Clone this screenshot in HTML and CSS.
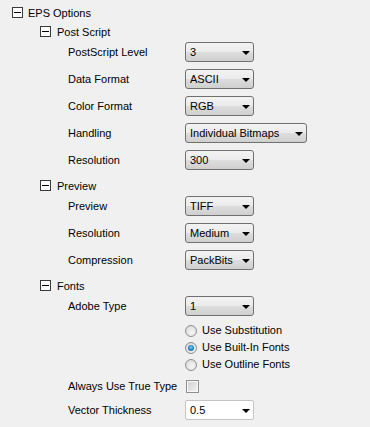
FILE: index.html
```html
<!DOCTYPE html>
<html lang="en">
<head>
  <meta charset="UTF-8" />
  <title>EPS Options</title>
  <link rel="stylesheet" href="styles.css">
</head>
<body>
  <div class="tree">
    <div class="node-head lvl0"><span class="expander"></span><span>EPS Options</span></div>

    <div class="node-head lvl1"><span class="expander"></span><span>Post Script</span></div>
    <div class="prop"><span class="label">PostScript Level</span><div class="combo"><span>3</span><i class="arrow"></i></div></div>
    <div class="prop"><span class="label">Data Format</span><div class="combo"><span>ASCII</span><i class="arrow"></i></div></div>
    <div class="prop"><span class="label">Color Format</span><div class="combo"><span>RGB</span><i class="arrow"></i></div></div>
    <div class="prop"><span class="label">Handling</span><div class="combo wide"><span>Individual Bitmaps</span><i class="arrow"></i></div></div>
    <div class="prop"><span class="label">Resolution</span><div class="combo"><span>300</span><i class="arrow"></i></div></div>

    <div class="node-head lvl1"><span class="expander"></span><span>Preview</span></div>
    <div class="prop"><span class="label">Preview</span><div class="combo"><span>TIFF</span><i class="arrow"></i></div></div>
    <div class="prop"><span class="label">Resolution</span><div class="combo"><span>Medium</span><i class="arrow"></i></div></div>
    <div class="prop"><span class="label">Compression</span><div class="combo"><span>PackBits</span><i class="arrow"></i></div></div>

    <div class="node-head lvl1"><span class="expander"></span><span>Fonts</span></div>
    <div class="prop"><span class="label">Adobe Type</span><div class="combo"><span>1</span><i class="arrow"></i></div></div>
    <div class="radios">
      <div class="radio-row"><span class="radio"></span><span>Use Substitution</span></div>
      <div class="radio-row"><span class="radio checked"></span><span>Use Built-In Fonts</span></div>
      <div class="radio-row"><span class="radio"></span><span>Use Outline Fonts</span></div>
    </div>
    <div class="prop check-row"><span class="label">Always Use True Type</span><span class="checkbox"></span></div>
    <div class="prop"><span class="label">Vector Thickness</span><div class="combo editable"><span>0.5</span><i class="arrow"></i></div></div>
  </div>
</body>
</html>
```

FILE: styles.css
```css
* {
  margin: 0;
  padding: 0;
  box-sizing: border-box;
}

body {
  font-family: 'Liberation Sans', Arial, sans-serif;
  font-size: 11px;
  color: #000;
  background: #f0f0f0;
  width: 370px;
  height: 427px;
  overflow: hidden;
}

.tree {
  padding-top: 3px;
}

/* Cabeceras con el cuadro de contraer */
.node-head {
  display: flex;
  align-items: center;
  height: 19px;
}

.node-head.lvl0 {
  padding-left: 12px;
}

.node-head.lvl1 {
  padding-left: 40px;
}

.expander {
  position: relative;
  width: 11px;
  height: 11px;
  border: 1px solid #3a3a3a;
  background: #fff;
  margin-right: 5px;
}

.expander::after {
  content: '';
  position: absolute;
  left: 1px;
  right: 1px;
  top: 4px;
  height: 1px;
  background: #000;
}

.node-head.lvl1 .expander {
  margin-right: 6px;
}

/* Filas de propiedades */
.prop {
  display: flex;
  align-items: flex-start;
  height: 27px;
  padding-left: 68px;
}

.prop .label {
  width: 117px;
  margin-top: 1px;
  line-height: 20px;
  white-space: nowrap;
}

.combo {
  position: relative;
  margin-top: 1px;
  width: 69px;
  height: 20px;
  border: 1px solid #707070;
  border-radius: 3px;
  background: linear-gradient(to bottom, #f3f3f3 0%, #ebebeb 48%, #dddddd 52%, #cfcfcf 100%);
  display: flex;
  align-items: center;
  padding-left: 4px;
  line-height: 18px;
  white-space: nowrap;
}

.combo.wide {
  width: 122px;
}

.combo.editable {
  background: #fff;
  border-color: #c4c4c4;
  border-radius: 2px;
}

.arrow {
  position: absolute;
  right: 3px;
  top: 8px;
  width: 0;
  height: 0;
  border-left: 4px solid transparent;
  border-right: 4px solid transparent;
  border-top: 4px solid #000;
}

/* Botones de opción */
.radios {
  padding-left: 185px;
}

.radio-row {
  display: flex;
  align-items: center;
  height: 17px;
  line-height: 17px;
}

.radio {
  position: relative;
  width: 12px;
  height: 12px;
  margin-right: 5px;
  border-radius: 50%;
  border: 1px solid #8e8f8f;
  background: radial-gradient(circle at 60% 65%, #f6f6f6 0%, #e2e2e2 60%, #d0d0d0 100%);
}

.radio.checked::after {
  content: '';
  position: absolute;
  left: 2px;
  top: 2px;
  width: 6px;
  height: 6px;
  border-radius: 50%;
  background: radial-gradient(circle at 50% 40%, #7fd0f4 0%, #2e8fcf 45%, #134f7f 100%);
}

.check-row {
  height: 26px;
  align-items: center;
}

.check-row .label {
  margin-top: 0;
  width: 118px;
}

.checkbox {
  width: 13px;
  height: 13px;
  border: 1px solid #8e8f8f;
  background: linear-gradient(to bottom right, #cfcfcf, #f4f4f4);
  box-shadow: inset 0 0 0 1px #f8f8f8;
}
```
